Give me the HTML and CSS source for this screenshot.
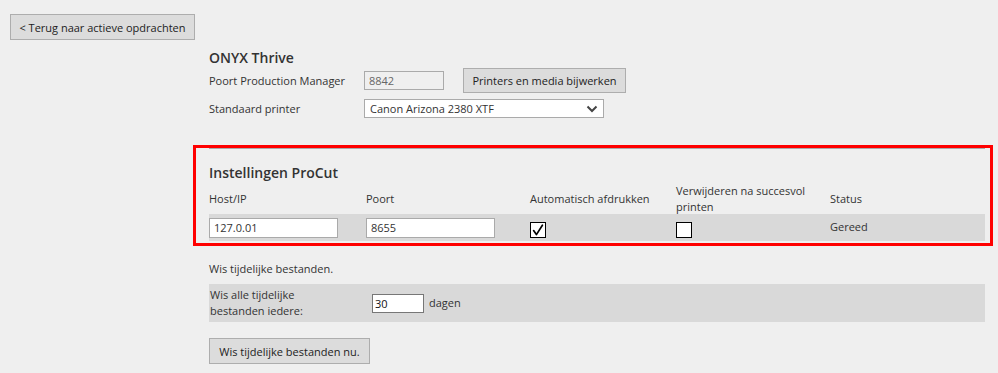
FILE: index.html
```html
<!DOCTYPE html>
<html lang="nl">
<head>
<meta charset="utf-8">
<title>Instellingen</title>
<link rel="stylesheet" href="styles.css">
</head>
<body>
<div class="page">
  <button class="btn back">&lt; Terug naar actieve opdrachten</button>

  <section class="onyx">
    <h2 class="title">ONYX Thrive</h2>
    <div class="form-row first">
      <label class="lbl">Poort Production Manager</label>
      <input class="field port" type="text" value="8842" disabled>
      <button class="btn refresh">Printers en media bijwerken</button>
    </div>
    <div class="form-row">
      <label class="lbl">Standaard printer</label>
      <div class="select">
        <span>Canon Arizona 2380 XTF</span>
        <svg class="chev" width="12" height="8" viewBox="0 0 12 8"><path d="M1.5 1.5 L6 6 L10.5 1.5" fill="none" stroke="#444" stroke-width="2"/></svg>
      </div>
    </div>
  </section>

  <section class="procut">
    <div class="rule"></div>
    <h2 class="title">Instellingen ProCut</h2>
    <div class="grid head">
      <div>Host/IP</div>
      <div>Poort</div>
      <div>Automatisch afdrukken</div>
      <div class="wrap">Verwijderen na succesvol printen</div>
      <div>Status</div>
    </div>
    <div class="grid data">
      <div><input class="field host" type="text" value="127.0.01"></div>
      <div><input class="field host" type="text" value="8655"></div>
      <div><span class="check"><svg width="14" height="14" viewBox="0 0 14 14"><path d="M2.6 7.6 L5.4 11.6 L11.4 2.2" fill="none" stroke="#000" stroke-width="1.7" stroke-linecap="round" stroke-linejoin="round"/></svg></span></div>
      <div><span class="check"></span></div>
      <div class="status">Gereed</div>
    </div>
  </section>

  <section class="cleanup">
    <h3 class="sub">Wis tijdelijke bestanden.</h3>
    <div class="clean-row">
      <div class="clean-lbl">Wis alle tijdelijke bestanden iedere:</div>
      <input class="field days" type="text" value="30">
      <span class="unit">dagen</span>
    </div>
    <button class="btn clean">Wis tijdelijke bestanden nu.</button>
  </section>
</div>
</body>
</html>
```

FILE: styles.css
```css
* { box-sizing: border-box; }

html, body {
  margin: 0;
  background: #efefef;
}

body {
  font-family: "Open Sans", "Noto Sans", sans-serif;
  font-size: 11px;
  color: #333;
  width: 998px;
  height: 373px;
  overflow: hidden;
}

.page {
  padding: 14px 0 0 0;
}

.btn {
  font-family: inherit;
  font-size: 11px;
  color: #222;
  background: #dcdcdc;
  border: 1px solid #adadad;
  padding: 0;
  cursor: pointer;
}

.back {
  display: block;
  margin-left: 10px;
  width: 185px;
  height: 26px;
}

.title {
  margin: 0;
  font-size: 14px;
  font-weight: 600;
  line-height: 20px;
  color: #333;
}

.onyx {
  margin: 8px 0 0 209px;
}

.form-row {
  display: flex;
  align-items: center;
  height: 19px;
  margin-top: 6px;
}

.form-row.first {
  height: 25px;
  margin-top: 0;
}

.lbl {
  width: 155px;
}

.field {
  font-family: inherit;
  font-size: 11px;
  height: 19px;
  border: 1px solid #aaa;
  background: #fff;
  color: #333;
  padding: 0 4px;
  margin: 0;
}

.port {
  width: 80px;
  background: #efefef;
  color: #666;
}

.refresh {
  margin-left: 19px;
  width: 163px;
  height: 25px;
}

.select {
  width: 240px;
  height: 19px;
  background: #fff;
  border: 1px solid #aaa;
  display: flex;
  align-items: center;
  justify-content: space-between;
  padding: 0 5px 0 5px;
  color: #333;
}

.procut {
  margin: 27px 0 0 193px;
  width: 800px;
  border: 3px solid #ff0000;
  padding: 0 5px 2px 13px;
}

.rule {
  height: 1px;
  background: #aaa;
}

.procut .title {
  margin-top: 14px;
}

.grid {
  display: grid;
  grid-template-columns: 157px 164px 146px 154px 1fr;
  align-items: center;
}

.head {
  height: 31px;
  line-height: 16px;
}

.wrap {
  width: 130px;
}

.data {
  height: 27px;
  background: #d9d9d9;
}

.host {
  width: 129px;
  height: 20px;
}

.check {
  display: block;
  width: 16px;
  height: 16px;
  margin-top: 4px;
  background: #fff;
  border: 1px solid #000;
}

.check svg {
  display: block;
  margin: 0;
}

.status {
  margin-top: -2px;
}

.cleanup {
  margin: 0 0 0 209px;
  width: 776px;
}

.sub {
  margin: 15px 0 0 0;
  font-size: 11px;
  font-weight: 400;
  line-height: 16px;
}

.clean-row {
  display: flex;
  align-items: center;
  height: 38px;
  margin-top: 7px;
  background: #d9d9d9;
}

.clean-lbl {
  width: 163px;
  padding: 0 40px 0 1px;
  line-height: 16px;
}

.days {
  width: 52px;
  height: 19px;
  color: #111;
  padding: 0 2px;
  border-color: #777;
}

.unit {
  margin-left: 5px;
  margin-top: -2px;
}

.clean {
  display: block;
  margin-top: 16px;
  width: 161px;
  height: 26px;
}
```
